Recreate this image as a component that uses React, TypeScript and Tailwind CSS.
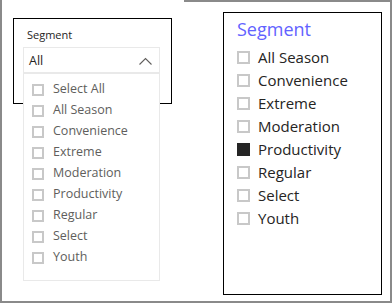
import React from "react";

const leftItems = ["Select All", "All Season", "Convenience", "Extreme", "Moderation", "Productivity", "Regular", "Select", "Youth"];
const rightItems = ["All Season", "Convenience", "Extreme", "Moderation", "Productivity", "Regular", "Select", "Youth"];

export default function App() {
  return (
    <div
      className="w-[392px] h-[303px] bg-white flex flex-col border-l-2 border-r-2 border-b-2 border-[#8a8a8a]"
      style={{ fontFamily: '"Open Sans", "Noto Sans", sans-serif' }}
    >
      <div className="h-[2px] flex shrink-0">
        <div className="w-[182px]" />
        <div className="flex-1 bg-[#8a8a8a]" />
      </div>
      <div className="flex items-start">
        {/* Left slicer (dropdown) */}
        <div className="ml-[11px] mt-[16px] w-[159px] h-[86px] border border-black relative">
          <div className="pl-[13px] pt-[8px] h-[28px] text-[11px] leading-[15px] text-[#252423]">Segment</div>
          <div className="ml-[9px] w-[137px] relative">
            <div className="h-[27px] border border-b-2 border-[#e9e9e9] flex items-center justify-between pl-[5px] pr-[6px] pt-[3px]">
              <span className="text-[12.5px] text-[#252423]">All</span>
              <svg width="13" height="8" viewBox="0 0 13 8" className="mr-[1px] mb-[2px]">
                <path d="M0.5 7.5 L6.5 1.5 L12.5 7.5" fill="none" stroke="#605e5c" strokeWidth="1.1" />
              </svg>
            </div>
            <div className="absolute left-0 top-full w-[137px] bg-white border border-t-0 border-[#e9e9e9] pt-[5px] pb-[12px] pl-[8px]">
              {leftItems.map((t) => (
                <div key={t} className="h-[21px] flex items-center">
                  <div className="w-[12px] h-[12px] border-2 border-[#c8c8c8] bg-white shrink-0" />
                  <span className="ml-[9px] text-[12.5px] text-[#605e5c] whitespace-nowrap">{t}</span>
                </div>
              ))}
            </div>
          </div>
        </div>
        {/* Right slicer (list) */}
        <div className="ml-[51px] mt-[10px] w-[159px] h-[283px] border border-black pl-[13px] pt-[4px]">
          <div className="h-[24px] text-[18px] leading-[24px] text-[#6262ff]">Segment</div>
          <div className="mt-[5px]">
            {rightItems.map((t) => (
              <div key={t} className="h-[23px] flex items-center">
                <div
                  className={
                    t === "Productivity"
                      ? "w-[13px] h-[13px] bg-[#252525] shrink-0"
                      : "w-[13px] h-[13px] border-2 border-[#c8c8c8] bg-white shrink-0"
                  }
                />
                <span className="ml-[8px] text-[15px] text-[#252423] whitespace-nowrap">{t}</span>
              </div>
            ))}
          </div>
        </div>
      </div>
    </div>
  );
}
